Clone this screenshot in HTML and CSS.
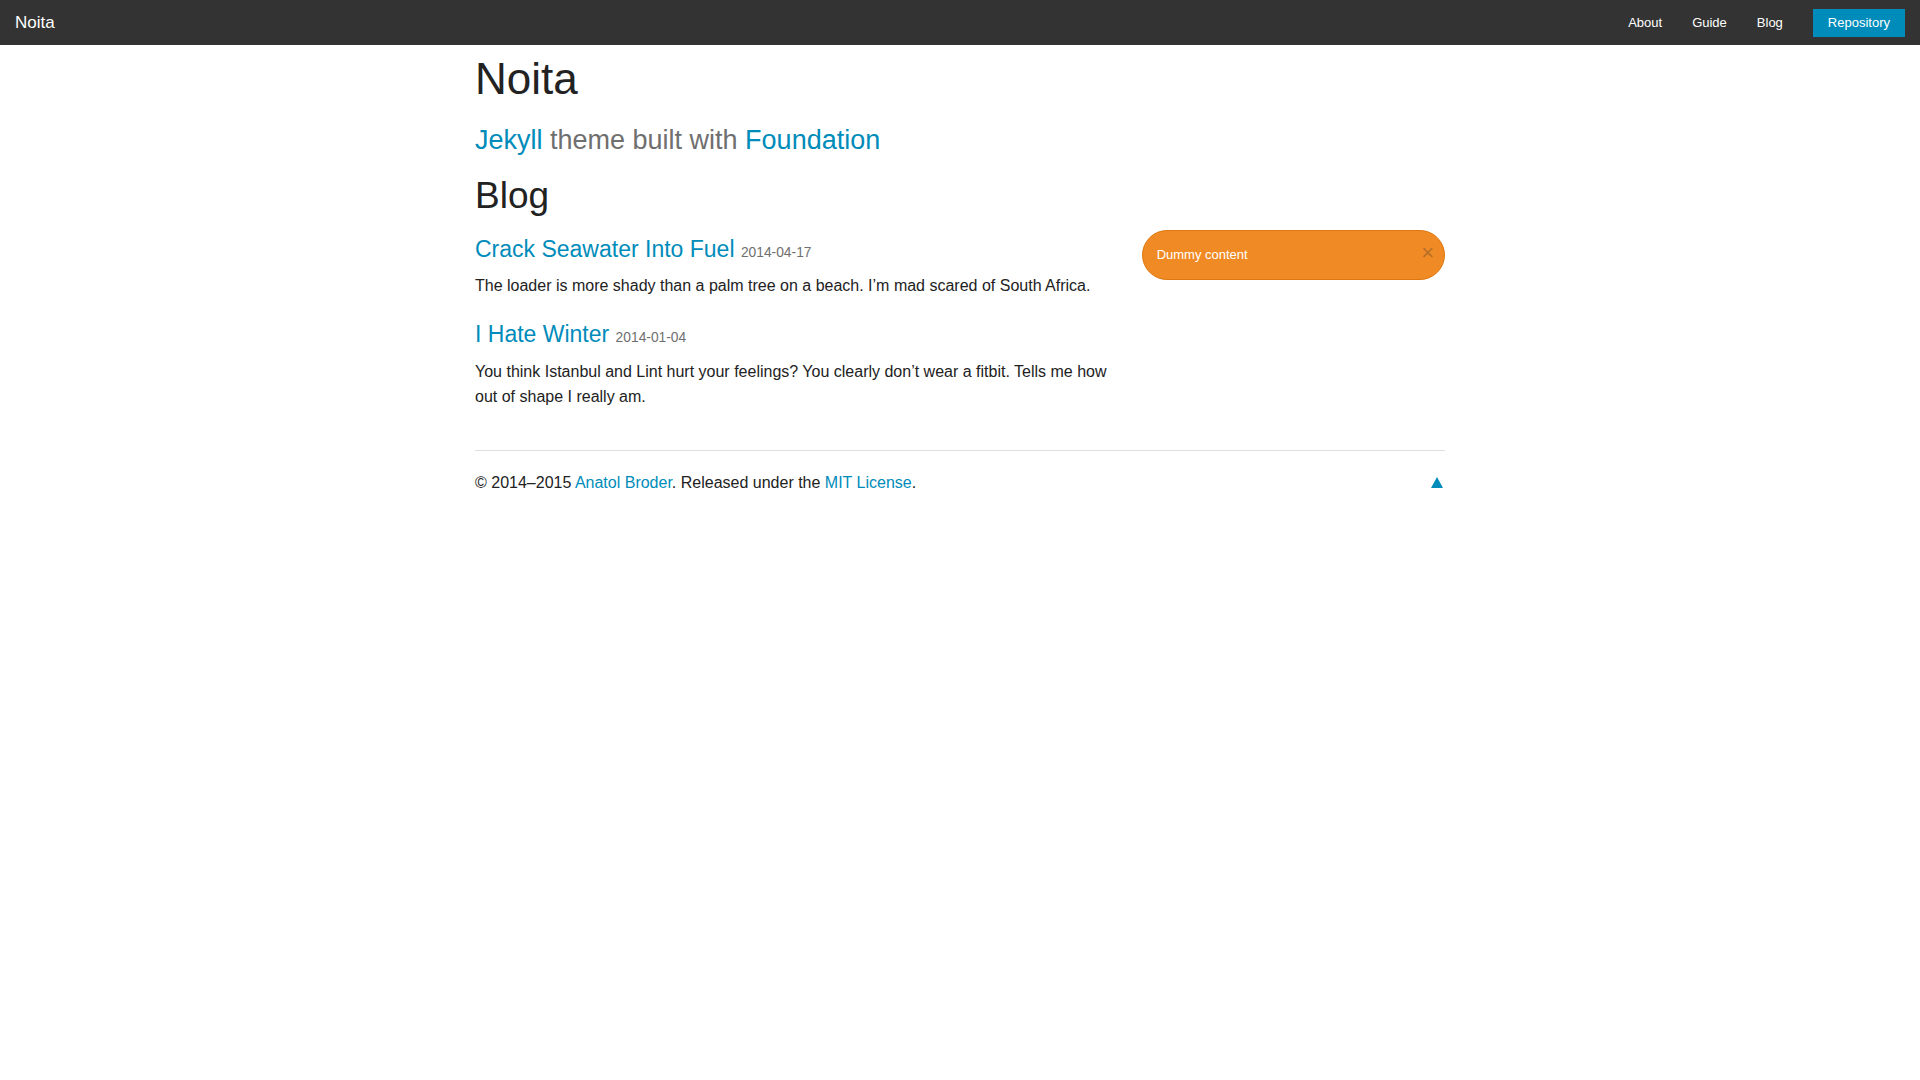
FILE: index.html
```html
<!DOCTYPE html>
<html lang="en">
<head>
    <meta charset="UTF-8">
    <title>Blog · Noita</title>
    <link rel="stylesheet" href="styles.css">
</head>
<body>
    <nav class="top-bar">
        <a class="name" href="#">Noita</a>
        <ul class="menu">
            <li><a href="#">About</a></li>
            <li><a href="#">Guide</a></li>
            <li><a href="#">Blog</a></li>
            <li class="has-button"><a class="button" href="#">Repository</a></li>
        </ul>
    </nav>

    <div class="row">
        <div class="column">
            <h1>Noita</h1>
            <h3 class="subheader"><a href="#">Jekyll</a> theme built with <a href="#">Foundation</a></h3>
            <h2>Blog</h2>
        </div>
    </div>

    <div class="row">
        <div class="column main">
            <h4><a href="#">Crack Seawater Into Fuel</a> <small>2014-04-17</small></h4>
            <p>The loader is more shady than a palm tree on a beach. I’m mad scared of South Africa.</p>

            <h4><a href="#">I Hate Winter</a> <small>2014-01-04</small></h4>
            <p>You think Istanbul and Lint hurt your feelings? You clearly don’t wear a fitbit. Tells me how out of shape I really am.</p>
        </div>
        <div class="column side">
            <div class="alert-box">
                Dummy content
                <a href="#" class="close">&times;</a>
            </div>
        </div>
    </div>

    <footer class="row">
        <div class="column">
            <hr>
            <div class="footer-line">
                <p>© 2014–2015 <a href="#">Anatol Broder</a>. Released under the <a href="#">MIT License</a>.</p>
                <a href="#" class="to-top" title="Top"><svg width="12" height="11" viewBox="0 0 12 11"><polygon points="6,0 12,11 0,11" fill="#008cba"/></svg></a>
            </div>
        </div>
    </footer>
</body>
</html>
```

FILE: styles.css
```css
body {
    margin: 0;
    font-family: "Liberation Sans", Arial, sans-serif;
    font-size: 16px;
    line-height: 1.5;
    color: #222;
    background-color: #fff;
}
a {
    color: #008cba;
    text-decoration: none;
}

/* top bar */
.top-bar {
    display: flex;
    justify-content: space-between;
    align-items: center;
    height: 45px;
    background-color: #333;
}
.top-bar .name {
    padding-left: 15px;
    font-size: 17px;
    color: #fff;
}
.menu {
    display: flex;
    align-items: center;
    height: 45px;
    margin: 0;
    padding: 0;
    list-style: none;
}
.menu a {
    display: block;
    padding: 0 15px;
    font-size: 13px;
    line-height: 45px;
    color: #fff;
}
.menu .has-button {
    padding: 0 15px;
}
.menu a.button {
    padding: 0 15px;
    line-height: 28px;
    margin-top: 1px;
    background-color: #008cba;
}

/* grid */
.row {
    display: flex;
    max-width: 1000px;
    margin: 0 auto;
}
.column {
    box-sizing: border-box;
    width: 100%;
    padding: 0 15px;
}
.main {
    width: 66.6667%;
}
.side {
    width: 33.3333%;
}

/* type */
h1, h2, h3, h4 {
    margin: 3.2px 0 8px;
    font-weight: normal;
    line-height: 1.4;
    color: #222;
}
h1 {
    font-size: 44px;
}
h2 {
    font-size: 37px;
}
h3 {
    font-size: 27px;
}
h4 {
    font-size: 23px;
}
.subheader {
    margin: 12px 0 10px;
    color: #6f6f6f;
}
h4 small {
    font-size: 60%;
    color: #6f6f6f;
    line-height: 0;
}
p {
    margin: 0 0 20px;
    line-height: 1.6;
}

/* alert */
.alert-box {
    position: relative;
    margin-top: 1px;
    padding: 14px 24px 14px 14px;
    font-size: 13px;
    color: #fff;
    background-color: #f08a24;
    border: 1px solid #de770f;
    border-radius: 1000px;
}
.alert-box .close {
    position: absolute;
    top: 50%;
    right: 4px;
    margin-top: -12px;
    padding: 0 6px 4px;
    font-size: 22px;
    line-height: 0.9;
    color: #333;
    opacity: 0.3;
}

/* footer */
hr {
    margin: 20px 0 19px;
    border: 0;
    border-top: 1px solid #ddd;
}
.footer-line {
    display: flex;
    justify-content: space-between;
}
.to-top {
    display: block;
    padding: 1px 2px 0 0;
}
```
